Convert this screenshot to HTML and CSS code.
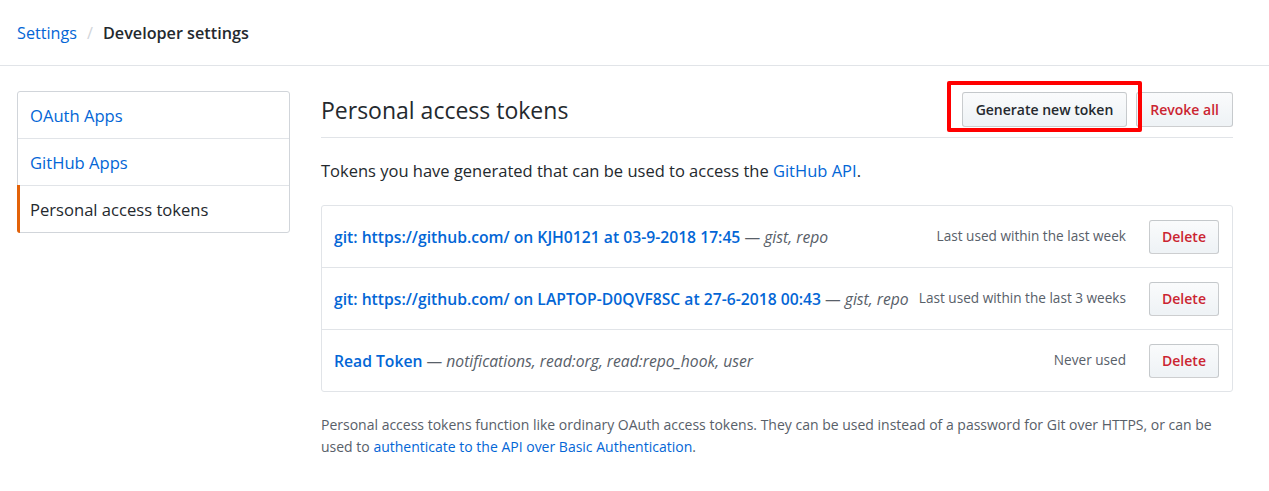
FILE: index.html
```html
<!DOCTYPE html>
<html>
<head>
<meta charset="utf-8">
<link rel="stylesheet" href="styles.css">
</head>
<body>
<header class="pagehead">
  <nav class="breadcrumb">
    <a class="crumb-link" href="#">Settings</a>
    <span class="crumb-sep">/</span>
    <span class="crumb-current">Developer settings</span>
  </nav>
</header>
<div class="container">
  <nav class="menu">
    <a class="menu-item" href="#">OAuth Apps</a>
    <a class="menu-item" href="#">GitHub Apps</a>
    <a class="menu-item selected" href="#">Personal access tokens</a>
  </nav>
  <main class="main">
    <div class="subhead">
      <h2 class="subhead-heading">Personal access tokens</h2>
      <div class="subhead-actions">
        <span class="highlight-wrap">
          <a class="btn" href="#">Generate new token</a>
          <span class="highlight-box"></span>
        </span>
        <a class="btn btn-danger" href="#">Revoke all</a>
      </div>
    </div>
    <p class="intro">Tokens you have generated that can be used to access the <a href="#">GitHub API</a>.</p>
    <div class="token-list">
      <div class="token-row">
        <div class="token-desc"><a class="token-name" href="#">git: https://github.com/ on KJH0121 at 03-9-2018 17:45</a> <span class="token-scopes">— <em>gist, repo</em></span></div>
        <span class="token-used">Last used within the last week</span>
        <a class="btn btn-danger btn-sm" href="#">Delete</a>
      </div>
      <div class="token-row">
        <div class="token-desc"><a class="token-name" href="#">git: https://github.com/ on LAPTOP-D0QVF8SC at 27-6-2018 00:43</a> <span class="token-scopes">— <em>gist, repo</em></span></div>
        <span class="token-used">Last used within the last 3 weeks</span>
        <a class="btn btn-danger btn-sm" href="#">Delete</a>
      </div>
      <div class="token-row">
        <div class="token-desc"><a class="token-name" href="#">Read Token</a> <span class="token-scopes">— <em>notifications, read:org, read:repo_hook, user</em></span></div>
        <span class="token-used">Never used</span>
        <a class="btn btn-danger btn-sm" href="#">Delete</a>
      </div>
    </div>
    <p class="note">Personal access tokens function like ordinary OAuth access tokens. They can be used instead of a password for Git over HTTPS, or can be used to <a href="#">authenticate to the API over Basic Authentication</a>.</p>
  </main>
</div>
</body>
</html>
```
FILE: styles.css
```css
* { box-sizing: border-box; }
html, body { margin: 0; padding: 0; background: #fff; }
body {
  font-family: "Open Sans", "Noto Sans", "Liberation Sans", sans-serif;
  color: #24292e;
  font-size: 15px;
}
a { color: #0366d6; text-decoration: none; }

.pagehead {
  height: 66px;
  border-bottom: 1px solid #e1e4e8;
  display: flex;
  align-items: center;
  padding-left: 17px;
}
.breadcrumb { font-size: 16.2px; display: flex; align-items: center; }
.crumb-sep { color: #d1d5da; margin: 0 10px; }
.crumb-current { font-weight: 600; color: #24292e; }

.container {
  display: flex;
  gap: 31px;
  padding: 25px 36px 0 17px;
}
.menu {
  width: 273px;
  flex: none;
  align-self: flex-start;
  border: 1px solid #d1d5da;
  border-radius: 3px;
  display: flex;
  flex-direction: column;
}
.menu-item {
  position: relative;
  height: 47px;
  display: flex;
  align-items: center;
  padding-left: 12px;
  padding-top: 1px;
  font-size: 16.6px;
  border-top: 1px solid #e1e4e8;
}
.menu-item:first-child { border-top: 0; height: 46px; }
.menu-item.selected { color: #24292e; }
.menu-item.selected::before {
  content: "";
  position: absolute;
  left: -1px; top: -1px; bottom: -1px;
  width: 3px;
  background: #e36209;
  border-bottom-left-radius: 3px;
}

.main { flex: 1; min-width: 0; }
.subhead {
  display: flex;
  align-items: center;
  justify-content: space-between;
  padding: 1px 0 10px;
  border-bottom: 1px solid #e1e4e8;
}
.subhead-heading {
  margin: 0;
  font-size: 23px;
  font-weight: 400;
}
.subhead-actions { display: flex; gap: 9px; }
.btn {
  display: inline-flex;
  align-items: center;
  justify-content: center;
  height: 35px;
  padding: 0 13px;
  font-size: 14px;
  font-weight: 600;
  color: #24292e;
  background: linear-gradient(-180deg, #fafbfc 0%, #eff3f6 90%);
  border: 1px solid rgba(27,31,35,.2);
  border-radius: 3px;
  white-space: nowrap;
}
.btn-danger { color: #cb2431; }
.highlight-wrap { position: relative; display: inline-flex; }
.highlight-box {
  position: absolute;
  left: -15px; right: -15px; top: -11px; bottom: -5px;
  border: 4px solid #ff0000;
  border-radius: 2px;
  pointer-events: none;
}

.intro {
  margin: 21px 0 22px;
  line-height: 24px;
  font-size: 16.5px;
}
.token-list {
  border: 1px solid #e1e4e8;
  border-radius: 3px;
}
.token-row {
  display: flex;
  align-items: center;
  height: 62px;
  padding: 0 13px 0 12px;
  border-top: 1px solid #e1e4e8;
}
.token-row:first-child { border-top: 0; height: 61px; }
.token-desc { flex: 1; min-width: 0; white-space: nowrap; font-size: 15.7px; }
.token-name { font-weight: 600; }
.token-scopes { color: #586069; }
.token-used { color: #586069; font-size: 13.6px; margin-right: 23px; margin-top: -2px; }
.btn-sm { width: 70px; height: 34px; padding: 0; }

.note {
  margin: 22px 0 0;
  font-size: 14px;
  line-height: 22px;
  color: #586069;
}
```
